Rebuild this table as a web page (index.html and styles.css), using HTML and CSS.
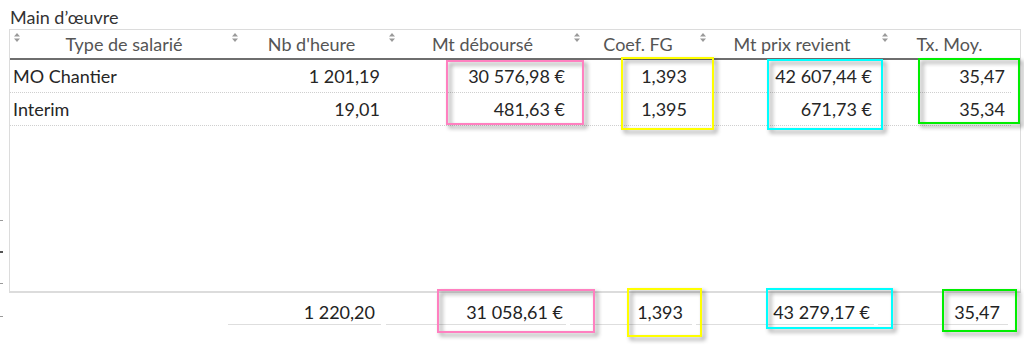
FILE: index.html
```html
<!DOCTYPE html>
<html lang="fr">
<head>
<meta charset="utf-8">
<title>Main d'œuvre</title>
<link rel="stylesheet" href="styles.css">
</head>
<body>
<div class="page">
  <div class="title">Main d’œuvre</div>
  <div class="frame">
    <div class="table">
      <div class="row head">
        <div class="th"><svg class="sort" viewBox="0 0 6 9"><path d="M3 0L6 3.5H0Z M3 9L0 5.5H6Z"/></svg><span class="lbl">Type de salarié</span></div>
        <div class="th"><svg class="sort" viewBox="0 0 6 9"><path d="M3 0L6 3.5H0Z M3 9L0 5.5H6Z"/></svg><span class="lbl">Nb d'heure</span></div>
        <div class="th"><svg class="sort" viewBox="0 0 6 9"><path d="M3 0L6 3.5H0Z M3 9L0 5.5H6Z"/></svg><span class="lbl">Mt déboursé</span></div>
        <div class="th"><svg class="sort" viewBox="0 0 6 9"><path d="M3 0L6 3.5H0Z M3 9L0 5.5H6Z"/></svg><span class="lbl">Coef. FG</span></div>
        <div class="th"><svg class="sort" viewBox="0 0 6 9"><path d="M3 0L6 3.5H0Z M3 9L0 5.5H6Z"/></svg><span class="lbl">Mt prix revient</span></div>
        <div class="th"><svg class="sort" viewBox="0 0 6 9"><path d="M3 0L6 3.5H0Z M3 9L0 5.5H6Z"/></svg><span class="lbl">Tx. Moy.</span></div>
      </div>
      <div class="row data">
        <div class="td c1">MO Chantier</div>
        <div class="td c2">1 201,19</div>
        <div class="td c3">30 576,98 €</div>
        <div class="td c4">1,393</div>
        <div class="td c5">42 607,44 €</div>
        <div class="td c6">35,47</div>
      </div>
      <div class="row data">
        <div class="td c1">Interim</div>
        <div class="td c2">19,01</div>
        <div class="td c3">481,63 €</div>
        <div class="td c4">1,395</div>
        <div class="td c5">671,73 €</div>
        <div class="td c6">35,34</div>
      </div>
    </div>
  </div>
  <div class="foot">
    <div class="fc f1"></div>
    <div class="fc f2">1 220,20</div>
    <div class="fc f3">31 058,61 €</div>
    <div class="fc f4">1,393</div>
    <div class="fc f5">43 279,17 €</div>
    <div class="fc f6">35,47</div>
  </div>

  <span class="tick t1"></span>
  <span class="tick t2"></span>
  <span class="tick t3"></span>
  <span class="tick t4"></span>

  <div class="mark pink m1"></div>
  <div class="mark yellow m2"></div>
  <div class="mark cyan m3"></div>
  <div class="mark green m4"></div>
  <div class="mark pink m5"></div>
  <div class="mark yellow m6"></div>
  <div class="mark cyan m7"></div>
  <div class="mark green m8"></div>
</div>
</body>
</html>
```

FILE: styles.css
```css
* { box-sizing: border-box; }
html, body { margin: 0; padding: 0; background: #fff; }
body {
  font-family: Lato, "Liberation Sans", sans-serif;
  font-size: 18px;
  color: #262626;
}
.page {
  position: relative;
  width: 1024px;
  height: 345px;
  overflow: hidden;
}
.title {
  height: 29px;
  padding-left: 10px;
  line-height: 34px;
  color: #333;
}
.frame {
  margin-left: 9px;
  width: 1012px;
  height: 264px;
  border: 1px solid #dcdcdc;
  border-bottom: 2px solid #dcdcdc;
}
.table { margin-right: 9px; }
.row {
  display: grid;
  grid-template-columns: 218px 157px 185px 126px 182px 1fr;
}
.head {
  height: 30px;
  border-bottom: 2px solid #6e6e6e;
}
.th {
  display: flex;
  align-items: flex-start;
  padding-left: 4px;
}
.sort {
  width: 6px;
  height: 9px;
  margin-top: 3px;
  fill: #9a9a9a;
  flex: none;
}
.lbl {
  flex: 1;
  text-align: center;
  line-height: 29px;
  color: #555;
  padding-left: 0;
}
.data {
  height: 33px;
  border-bottom: 1px dotted #cfcfcf;
  line-height: 33px;
}
.td { text-align: right; white-space: nowrap; }
.td.c1 { text-align: left; padding-left: 3px; }
.td.c2 { padding-right: 5px; }
.td.c3 { padding-right: 5px; }
.td.c4 { padding-right: 9px; }
.td.c5 { padding-right: 6px; }
.td.c6 { padding-right: 6px; }

.foot {
  display: grid;
  grid-template-columns: 218px 157px 185px 126px 182px 1fr;
  margin-left: 10px;
  width: 1000px;
}
.fc {
  height: 32px;
  padding-top: 8px;
  line-height: 23px;
  text-align: right;
  white-space: nowrap;
  color: #222;
}
.f2, .f3, .f4, .f5, .f6 { border-bottom: 1px solid #dedede; }
.f2 { margin-right: 4px; padding-right: 6px; }
.f3 { margin-left: 1px; margin-right: 4px; padding-right: 3px; }
.f4 { margin-right: 4px; padding-right: 9px; }
.f5 { margin-right: 4px; padding-right: 4px; }
.f6 { margin-right: 2px; padding-right: 8px; }

.tick {
  position: absolute;
  left: 0;
  width: 3px;
  height: 1px;
  background: #9a9a9a;
}
.t1 { top: 220px; }
.t2 { top: 251px; height: 2px; background: #555; }
.t3 { top: 283px; }
.t4 { top: 316px; }

.mark {
  position: absolute;
  border: 2.5px solid;
  filter: drop-shadow(3px 3px 2px rgba(0, 0, 0, 0.45));
}
.pink { border-color: #ff80c0; }
.yellow { border-color: #ffff00; }
.cyan { border-color: #00ffff; }
.green { border-color: #00ee00; }
.m1 { left: 446px; top: 60px; width: 138px; height: 65px; }
.m2 { left: 621px; top: 57px; width: 93px; height: 73px; }
.m3 { left: 767px; top: 59px; width: 116px; height: 71px; }
.m4 { left: 918px; top: 58px; width: 102px; height: 66px; }
.m5 { left: 437px; top: 289px; width: 158px; height: 44px; }
.m6 { left: 627px; top: 288px; width: 75px; height: 49px; }
.m7 { left: 766px; top: 288px; width: 127px; height: 41px; }
.m8 { left: 942px; top: 289px; width: 75px; height: 43px; }
```
